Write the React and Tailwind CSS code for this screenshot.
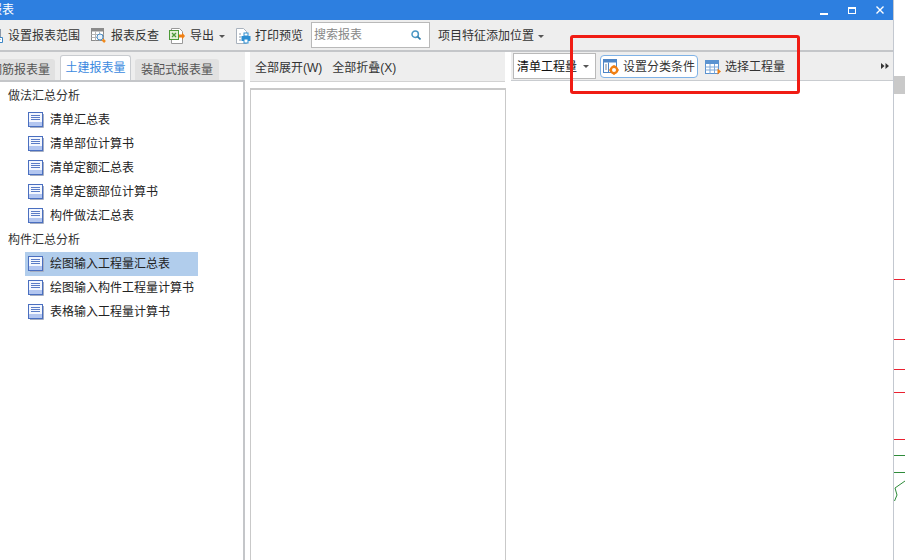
const font = { fontFamily: '"Liberation Sans", "Noto Sans CJK SC", sans-serif' };

function Caret({ className = '' }) {
  return <span className={`inline-block h-0 w-0 border-x-[3px] border-t-[3px] border-x-transparent border-t-[#555] ${className}`} />;
}

function SheetIcon() {
  return (
    <svg viewBox="0 0 16 16" className="h-4 w-4 shrink-0" aria-hidden="true">
      <rect x="0.5" y="0.5" width="14" height="14" fill="#f4f7fe" stroke="#4a6fc0" />
      <rect x="1" y="10" width="13" height="4" fill="#b3c6f0" />
      <path d="M3 3.5H12M3 5.5H12M3 7.5H12" stroke="#5b7cc6" />
      <path d="M15.5 2V15.5H2" stroke="#a5aec2" fill="none" />
    </svg>
  );
}

function RangeIcon() {
  return (
    <svg viewBox="0 0 16 16" className="h-4 w-4 shrink-0" aria-hidden="true">
      <rect x="1.5" y="1.5" width="12" height="11" fill="#fff" stroke="#8a97a8" />
      <path d="M8 9.5H15.5V14.5H8Z" fill="#fff" stroke="#3d86c6" />
      <path d="M10 11.5H13.5" stroke="#3d86c6" />
    </svg>
  );
}

function QueryIcon() {
  return (
    <svg viewBox="0 0 16 16" className="h-4 w-4 shrink-0" aria-hidden="true">
      <rect x="0.5" y="0.5" width="12" height="12" fill="#fff" stroke="#8b8b8b" />
      <rect x="1" y="1" width="11" height="2.5" fill="#8b8b8b" />
      <path d="M4.5 3.5V12.5M8.5 3.5V12.5M0.5 6.5H12.5M0.5 9.5H12.5" stroke="#b5b5b5" />
      <circle cx="9" cy="9" r="3" fill="#eaf3fb" stroke="#4e8fc7" />
      <path d="M11.5 11.5L14 14" stroke="#f08a1d" strokeWidth="2.5" />
    </svg>
  );
}

function ExportIcon() {
  return (
    <svg viewBox="0 0 16 16" className="h-4 w-4 shrink-0" aria-hidden="true">
      <path d="M2.5 0.5H10.5L13.5 3.5V15.5H2.5Z" fill="#fff" stroke="#9a9a9a" />
      <rect x="0.5" y="2.5" width="9" height="9" fill="#e4f0d8" stroke="#4d9a38" />
      <path d="M3 5L7 9M7 5L3 9" stroke="#4d9a38" strokeWidth="1.3" />
      <path d="M10 6.5H13V4.5L16 8L13 11.5V9.5H10Z" fill="#f07f13" />
    </svg>
  );
}

function PrintIcon() {
  return (
    <svg viewBox="0 0 16 16" className="h-4 w-4 shrink-0" aria-hidden="true">
      <path d="M1.5 0.5H8.5L11.5 3.5V15.5H1.5Z" fill="#fff" stroke="#a9b2bd" />
      <path d="M4 6H6M4 9H6M4 12H6" stroke="#8b98a8" />
      <rect x="9" y="5" width="4" height="3" fill="#fff" stroke="#2f8fd2" />
      <rect x="6.5" y="8" width="9" height="5" fill="#2f8fd2" />
      <rect x="9" y="11" width="4" height="4" fill="#fff" stroke="#2f8fd2" />
    </svg>
  );
}

function SearchGlyph() {
  return (
    <svg viewBox="0 0 10 10" className="h-[10px] w-[10px] shrink-0" aria-hidden="true">
      <circle cx="4.2" cy="4.2" r="3.2" fill="none" stroke="#4b97c4" strokeWidth="1.5" />
      <path d="M6.6 6.6L9.5 9.5" stroke="#2f7ba8" strokeWidth="1.6" />
    </svg>
  );
}

function ConditionIcon() {
  return (
    <svg viewBox="0 0 16 16" className="h-4 w-4 shrink-0" aria-hidden="true">
      <rect x="0.5" y="0.5" width="13" height="13" fill="#fff" stroke="#4f86c6" />
      <rect x="1" y="1" width="12" height="2.5" fill="#4f86c6" />
      <path d="M5.5 3.5V13.5" stroke="#4f86c6" />
      <path d="M2 6H4M2 8H4M2 10H4" stroke="#7a8797" />
      <circle cx="11" cy="11" r="3.2" fill="#fff" stroke="#f07f13" strokeWidth="2.4" />
      <path d="M11 6.3V7.5M11 14.5V15.7M6.3 11H7.5M14.5 11H15.7" stroke="#f07f13" strokeWidth="1.6" />
    </svg>
  );
}

function PickIcon() {
  return (
    <svg viewBox="0 0 16 16" className="h-4 w-4 shrink-0" aria-hidden="true">
      <rect x="0.5" y="1.5" width="13" height="13" fill="#fff" stroke="#5b93d0" />
      <rect x="1" y="2" width="12" height="3" fill="#5b93d0" />
      <path d="M5 5V14.5M9.5 5V14.5M0.5 8H13.5M0.5 11H13.5" stroke="#7fa9d8" />
      <path d="M12.5 9.5L16 12.5L12.5 15.5Z" fill="#f07f13" />
    </svg>
  );
}

function OverflowArrows() {
  return (
    <svg viewBox="0 0 8 6" className="ml-auto mr-[4px] h-[6px] w-2 shrink-0" aria-hidden="true">
      <path d="M0 0L3.5 3L0 6ZM4.5 0L8 3L4.5 6Z" fill="#333" />
    </svg>
  );
}

function TreeItem({ label, active }) {
  return (
    <div className={`ml-[25px] flex h-6 w-[173px] items-center gap-[6px] whitespace-nowrap pl-[3px] text-[#222] ${active ? 'bg-[#b1cdec]' : ''}`}>
      <SheetIcon />
      {label}
    </div>
  );
}

function TreeGroup({ label }) {
  return <div className="flex h-6 items-center pl-2 text-[#333]">{label}</div>;
}

export default function App() {
  return (
    <div className="relative flex h-[560px] w-[905px] overflow-hidden bg-white text-xs" style={font}>
      <div className="flex w-[894px] shrink-0 flex-col border-r border-[#c3c8d0]">
        <div className="flex h-5 shrink-0 items-center justify-between bg-[#2d7fe0] pr-[9px] text-white">
          <span className="-ml-[10px]">报表</span>
          <div className="flex items-center gap-5">
            <span className="mt-[7px] block h-[2px] w-2 bg-white" />
            <span className="block h-[7px] w-2 border border-t-2 border-white" />
            <svg viewBox="0 0 8 8" className="h-2 w-2" aria-hidden="true">
              <path d="M0.5 0.5L7.5 7.5M7.5 0.5L0.5 7.5" stroke="#fff" strokeWidth="1.4" />
            </svg>
          </div>
        </div>

        <div className="flex h-8 shrink-0 items-center border-b-2 border-[#c4c6c9] bg-[#eeeeee] pt-[2px] text-[#333]">
          <div className="-ml-[13px] flex items-center gap-[5px]">
            <RangeIcon />
            <span className="whitespace-nowrap">设置报表范围</span>
          </div>
          <div className="ml-[11px] flex items-center gap-1">
            <QueryIcon />
            <span className="whitespace-nowrap">报表反查</span>
          </div>
          <div className="ml-[10px] flex items-center gap-[5px]">
            <ExportIcon />
            <span>导出</span>
            <Caret />
          </div>
          <div className="ml-[10px] flex items-center gap-1">
            <PrintIcon />
            <span className="whitespace-nowrap">打印预览</span>
          </div>
          <div className="-mt-[2px] ml-2 flex h-[26px] w-[119px] items-center justify-between border border-[#b9b9b9] bg-white pl-[2px] pr-2 text-[#888]">
            <span>搜索报表</span>
            <SearchGlyph />
          </div>
          <span className="ml-2 whitespace-nowrap">项目特征添加位置</span>
          <Caret className="ml-1" />
        </div>

        <div className="flex min-h-0 flex-1">
          <div className="flex w-[245px] shrink-0 flex-col">
            <div className="flex h-7 shrink-0 items-end bg-[#eeeeee]">
              <div className="-ml-[15px] flex h-[21px] w-[70px] items-center justify-center rounded-t-[3px] bg-[#e1e1e1] text-[#555]">钢筋报表量</div>
              <div className="ml-[5px] flex h-[25px] w-[71px] items-center justify-center rounded-t-[3px] border border-b-0 border-[#c9ccd0] bg-white text-[#3b8ae0]">土建报表量</div>
              <div className="ml-1 flex h-[21px] w-[84px] items-center justify-center rounded-t-[3px] bg-[#e1e1e1] text-[#555]">装配式报表量</div>
            </div>
            <div className="flex-1 border-r-2 border-t-2 border-[#c4c6c9] bg-white pt-[2px]">
              <TreeGroup label="做法汇总分析" />
              <TreeItem label="清单汇总表" />
              <TreeItem label="清单部位计算书" />
              <TreeItem label="清单定额汇总表" />
              <TreeItem label="清单定额部位计算书" />
              <TreeItem label="构件做法汇总表" />
              <TreeGroup label="构件汇总分析" />
              <TreeItem label="绘图输入工程量汇总表" active />
              <TreeItem label="绘图输入构件工程量计算书" />
              <TreeItem label="表格输入工程量计算书" />
            </div>
          </div>

          <div className="ml-[5px] flex w-[255px] shrink-0 flex-col">
            <div className="flex h-[30px] shrink-0 items-center gap-[10px] border-b border-[#d2d2d2] bg-[#eeeeee] pl-[5px] pt-[2px] text-[#333]">
              <span>全部展开(W)</span>
              <span>全部折叠(X)</span>
            </div>
            <div className="mt-[6px] flex-1 border-l border-t-2 border-[#c9c9c9] bg-white" />
          </div>

          <div className="flex min-w-0 flex-1 flex-col">
            <div className="ml-[6px] flex h-[29px] shrink-0 items-center border-b border-[#c9ccd0] bg-[#eeeeee] text-[#333]">
              <div className="ml-[2px] flex h-[26px] w-[83px] items-center justify-between border border-[#b9b9b9] bg-white pl-[3px] pr-[6px] text-[#111]">
                <span className="whitespace-nowrap pt-[2px]">清单工程量</span>
                <Caret />
              </div>
              <div className="ml-[4px] mt-[1px] flex h-[23px] w-[98px] items-center gap-1 rounded-[4px] border border-[#7fb2e6] bg-white pl-[2px]">
                <ConditionIcon />
                <span className="whitespace-nowrap pt-[1px]">设置分类条件</span>
              </div>
              <div className="ml-[7px] mt-[1px] flex items-center gap-[4px]">
                <PickIcon />
                <span className="whitespace-nowrap pt-[1px]">选择工程量</span>
              </div>
              <OverflowArrows />
            </div>
            <div className="mt-[7px] flex-1 border-l border-[#c9c9c9] bg-white" />
          </div>
        </div>
      </div>

      <div className="flex min-w-0 flex-1 flex-col">
        <div className="mt-[76px] h-[18px] shrink-0 bg-[#c9c9c9]" />
        <svg viewBox="0 0 11 466" className="h-[466px] w-[11px] shrink-0" aria-hidden="true">
          <path d="M0 185.5H11M0 245.5H11M0 275.5H11M0 298.5H11M0 345.5H11" stroke="#ea2030" fill="none" />
          <path d="M0 361.5H11M0 378.5H11" stroke="#2e8b3a" fill="none" />
          <path d="M11 387L1 394L3 401L0.5 407" stroke="#2e8b3a" fill="none" />
        </svg>
      </div>

      <div className="pointer-events-none absolute left-[570px] top-[35px] h-[59px] w-[230px] rounded-[3px] border-[3px] border-[#f01c14]" />
    </div>
  );
}
